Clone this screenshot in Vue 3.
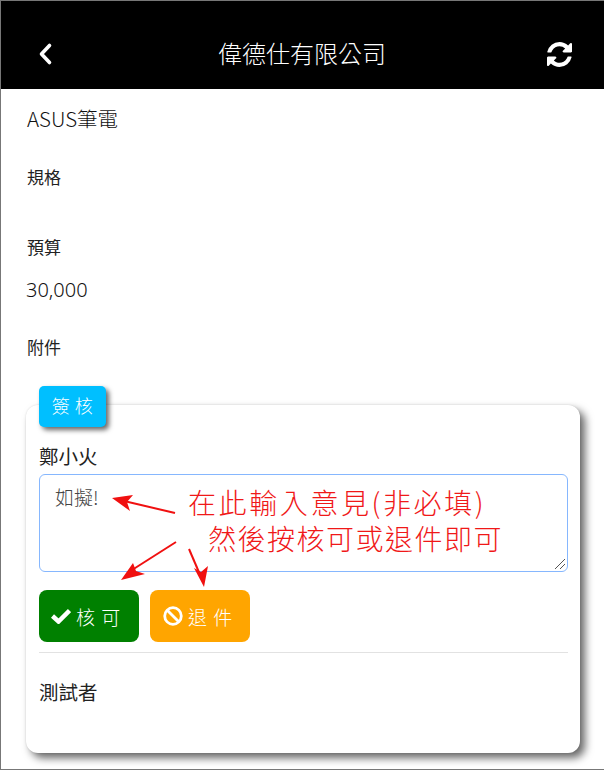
<script setup>
const arrows = [
  { line: 'M175 513 L124 501', head: 'M112 498 L133 495 L127 502 L130 511 Z' },
  { line: 'M176 542 L132 570', head: 'M121 580 L133 563 L136 571 L145 574 Z' },
  { line: 'M189 549 L201 577', head: 'M204 587 L194 568 L201 572 L208 566 Z' }
]
</script>

<template>
  <div class="page">
    <header class="bar">
      <svg class="back" viewBox="0 0 16 24" width="16" height="24" aria-hidden="true">
        <path d="M12.5 3.5 L4.5 12 L12.5 20.5" fill="none" stroke="#fff" stroke-width="3.6" stroke-linecap="round" stroke-linejoin="round" />
      </svg>
      <h1 class="title">偉德仕有限公司</h1>
      <svg class="refresh" viewBox="0 0 1536 1536" width="25" height="25" aria-hidden="true">
        <path fill="#fff" d="M1511 928q0 5-1 7-64 268-268 434.500t-478 166.500q-146 0-282.500-55t-243.500-157l-129 129q-19 19-45 19t-45-19-19-45v-448q0-26 19-45t45-19h448q26 0 45 19t19 45-19 45l-137 137q71 66 161 102t187 36q134 0 250-65t186-179q11-17 53-117 8-23 30-23h192q13 0 22.500 9.500t9.500 22.500zm25-800v448q0 26-19 45t-45 19h-448q-26 0-45-19t-19-45 19-45l138-138q-148-137-349-137-134 0-250 65t-186 179q-11 17-53 117-8 23-30 23h-199q-13 0-22.500-9.500t-9.500-22.500v-7q65-268 270-434.500t480-166.500q146 0 284 55.500t245 156.500l130-129q19-19 45-19t45 19 19 45z" />
      </svg>
    </header>

    <main class="content">
      <p class="value first">ASUS筆電</p>
      <p class="label spec">規格</p>
      <p class="label budget">預算</p>
      <p class="value amount">30,000</p>
      <p class="label attach">附件</p>

      <section class="card">
        <div class="tag">簽 核</div>
        <p class="name">鄭小火</p>
        <div class="box">
          <span class="opinion">如擬!</span>
          <svg class="grip" viewBox="0 0 12 12" width="12" height="12" aria-hidden="true">
            <path d="M1 11 L11 1 M6 11 L11 6" stroke="#555" stroke-width="1" fill="none" />
          </svg>
        </div>
        <div class="actions">
          <button class="btn ok" type="button">
            <svg viewBox="0 0 20 16" width="20" height="16" aria-hidden="true">
              <path d="M1.500 8 L7.500 13.500 L18.500 2.500" fill="none" stroke="#fff" stroke-width="4.500" stroke-linejoin="miter" />
            </svg>
            <span>核 可</span>
          </button>
          <button class="btn reject" type="button">
            <svg viewBox="0 0 20 20" width="20" height="20" aria-hidden="true">
              <circle cx="10" cy="10" r="8.300" fill="none" stroke="#fff" stroke-width="2.800" />
              <path d="M4.500 4.500 L15.500 15.500" stroke="#fff" stroke-width="2.800" />
            </svg>
            <span>退 件</span>
          </button>
        </div>
        <hr class="rule" />
        <p class="name tester">測試者</p>
      </section>
    </main>

    <div class="note one">在此輸入意見(非必填)</div>
    <div class="note two">然後按核可或退件即可</div>
    <svg class="marks" viewBox="0 0 604 770" width="604" height="770" aria-hidden="true">
      <g v-for="(a, i) in arrows" :key="i">
        <path :d="a.line" stroke="#f01010" stroke-width="2" fill="none" />
        <path :d="a.head" fill="#f01010" />
      </g>
    </svg>
  </div>
</template>

<style scoped>
.page {
  position: relative;
  box-sizing: border-box;
  width: 604px;
  height: 770px;
  overflow: hidden;
  background: #fff;
  border: 1px solid #777;
  border-right-width: 0;
  font-family: "Noto Sans CJK TC", "Noto Sans", sans-serif;
  color: #212529;
}
.bar {
  display: flex;
  align-items: center;
  justify-content: space-between;
  box-sizing: border-box;
  height: 88px;
  padding: 18px 32px 0 36px;
  background: #000;
  color: #fff;
}
.back { display: block; }
.refresh { display: block; }
.title {
  margin: -3px 0 0 4px;
  font-size: 24px;
  font-weight: 300;
  line-height: 1;
}
.content { padding: 0 24px 0 25px; }
p { margin: 0; }
.value { padding-left: 1px; font-size: 20.5px; font-weight: 300; line-height: 28px; color: #111; }
.first { padding-top: 15px; }
.label { padding-left: 1px; font-size: 17px; font-weight: 400; line-height: 24px; color: #222; }
.spec { margin-top: 33px; }
.budget { margin-top: 46px; }
.amount { margin-top: 17px; padding-left: 0; font-family: "Noto Sans", sans-serif; font-size: 20px; }
.attach { margin-top: 31px; }
.card {
  position: relative;
  box-sizing: border-box;
  height: 348px;
  margin-top: 46px;
  padding: 37px 12px 0 13px;
  background: #fff;
  border-radius: 12px;
  box-shadow: 5px 5px 8px rgba(0, 0, 0, 0.6), 0 0 2px rgba(0, 0, 0, 0.12);
}
.tag {
  position: absolute;
  left: 13px;
  top: -19px;
  width: 67px;
  height: 41px;
  border-radius: 5px;
  background: #00bfff;
  color: #fff;
  font-size: 18px;
  font-weight: 300;
  line-height: 39px;
  letter-spacing: 0.5px;
  text-align: center;
  box-shadow: 3px 3px 5px rgba(0, 0, 0, 0.6);
}
.name { font-size: 19.5px; font-weight: 400; line-height: 28px; color: #222; }
.box {
  position: relative;
  box-sizing: border-box;
  height: 98px;
  margin-top: 4px;
  padding: 10px 15px;
  border: 1px solid #86b7fe;
  border-radius: 6px;
}
.opinion { font-size: 19px; font-weight: 300; line-height: 24px; color: #444; }
.grip { position: absolute; right: 1px; bottom: 1px; }
.actions { display: flex; gap: 11px; margin-top: 18px; }
.btn {
  display: flex;
  align-items: center;
  gap: 5px;
  width: 100px;
  height: 52px;
  padding: 0 0 0 12px;
  border: 0;
  border-radius: 8px;
  color: #fff;
  font-family: inherit;
  font-size: 19px;
  font-weight: 300;
  letter-spacing: 1px;
}
.ok { background: #008000; }
.reject { background: #ffa500; padding-left: 13px; }
.rule { margin: 10px 0 0; border: 0; border-top: 1px solid #e2e2e2; }
.tester { margin-top: 25px; }
.note {
  position: absolute;
  color: #f01818;
  font-size: 28px;
  font-weight: 300;
  line-height: 1;
  white-space: nowrap;
}
.one { left: 187px; top: 487px; letter-spacing: 2.6px; }
.two { left: 207px; top: 523px; letter-spacing: 1.5px; }
.marks { position: absolute; left: -1px; top: -1px; pointer-events: none; }
</style>
